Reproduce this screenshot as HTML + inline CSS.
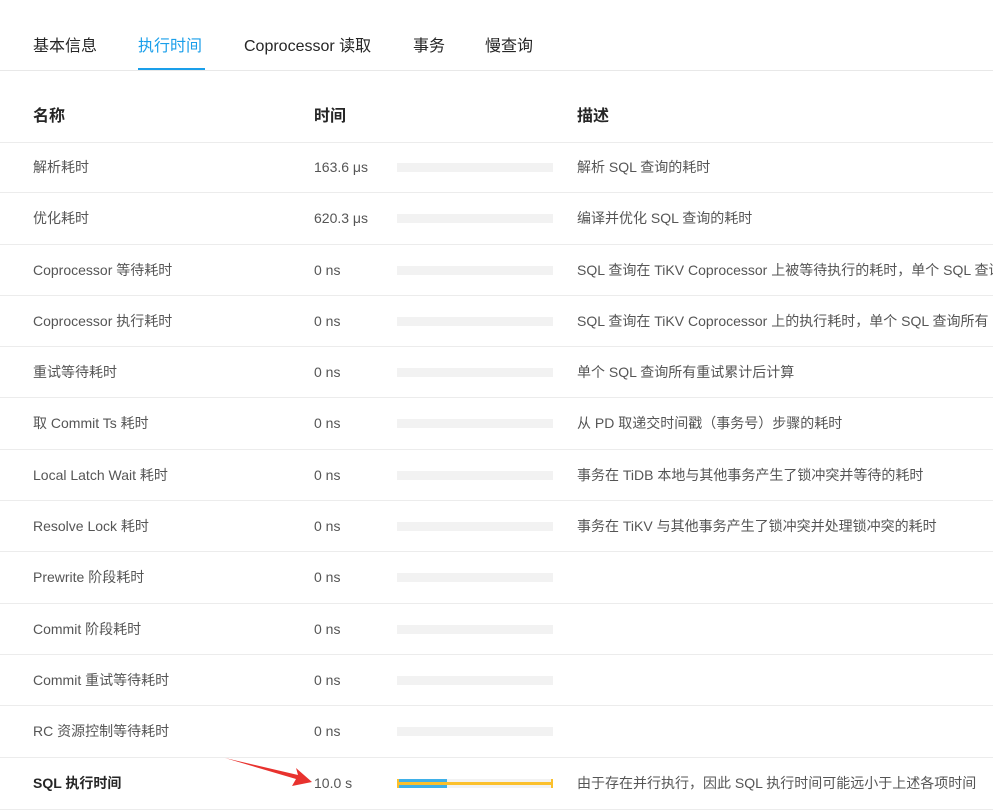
<!DOCTYPE html>
<html><head><meta charset="utf-8"><style>
body{margin:0;width:993px;height:810px;overflow:hidden;background:#fff;font-family:"Liberation Sans","Noto Sans CJK SC",sans-serif;color:#333;position:relative}
.tabs{position:absolute;top:0;left:0;width:993px;height:70px;border-bottom:1px solid #e8e8e8}
.tab{position:absolute;top:36px;font-size:16px;line-height:22px;color:#262626;white-space:nowrap}
.ink{position:absolute;left:138px;top:68px;width:67px;height:2px;background:#1a9fea}
.row{position:absolute;left:0;width:993px;border-bottom:1px solid #ececec;font-size:14px;color:#555}
.row span{position:absolute;white-space:nowrap;line-height:20px}
.bar{position:absolute;left:397px;width:156px;height:9px;background:#f2f2f2}
.h{font-weight:bold;color:#262626;font-size:16px}
</style></head><body>
<div class="tabs">
<div class="tab" style="left:33px">基本信息</div>
<div class="tab" style="left:138px;color:#1a9fea">执行时间</div>
<div class="tab" style="left:244px">Coprocessor 读取</div>
<div class="tab" style="left:413px">事务</div>
<div class="tab" style="left:485px">慢查询</div>
<div class="ink"></div>
</div>
<div class="row h" style="top:90px;height:52px"><span style="left:33px;top:17px">名称</span><span style="left:314px;top:17px">时间</span><span style="left:577px;top:17px">描述</span></div>
<div id="rows"></div>
<script>
var d=[["解析耗时","163.6 μs","解析 SQL 查询的耗时"],["优化耗时","620.3 μs","编译并优化 SQL 查询的耗时"],["Coprocessor 等待耗时","0 ns","SQL 查询在 TiKV Coprocessor 上被等待执行的耗时，单个 SQL 查询所有"],["Coprocessor 执行耗时","0 ns","SQL 查询在 TiKV Coprocessor 上的执行耗时，单个 SQL 查询所有"],["重试等待耗时","0 ns","单个 SQL 查询所有重试累计后计算"],["取 Commit Ts 耗时","0 ns","从 PD 取递交时间戳（事务号）步骤的耗时"],["Local Latch Wait 耗时","0 ns","事务在 TiDB 本地与其他事务产生了锁冲突并等待的耗时"],["Resolve Lock 耗时","0 ns","事务在 TiKV 与其他事务产生了锁冲突并处理锁冲突的耗时"],["Prewrite 阶段耗时","0 ns",""],["Commit 阶段耗时","0 ns",""],["Commit 重试等待耗时","0 ns",""],["RC 资源控制等待耗时","0 ns",""],["SQL 执行时间","10.0 s","由于存在并行执行，因此 SQL 执行时间可能远小于上述各项时间"]];
var t=[142,193,245,296,347,398,450,501,552,604,655,706,758,810],h="";
d.forEach(function(r,i){var top=t[i],ht=t[i+1]-t[i]-1,last=i==12;
h+='<div class="row" style="top:'+top+'px;height:'+ht+'px"><span style="left:33px;top:15px;'+(last?'font-weight:bold;color:#262626':'')+'">'+r[0]+'</span><span style="left:314px;top:15px">'+r[1]+'</span><div class="bar" style="top:21px"></div>'+(last?'<div style="position:absolute;left:397px;top:21px;width:50px;height:9px;background:#3fb0e8"></div><div style="position:absolute;left:397px;top:24px;width:156px;height:3px;background:#fbc02d"></div><div style="position:absolute;left:397px;top:21px;width:2px;height:9px;background:#fbc02d"></div><div style="position:absolute;left:551px;top:21px;width:2px;height:9px;background:#fbc02d"></div>':'')+'<span style="left:577px;top:15px">'+r[2]+'</span></div>';});
document.getElementById("rows").innerHTML=h;
</script>
<svg style="position:absolute;left:0;top:0" width="993" height="810"><polygon points="225,758 298,775 296,768 312,782 292,786 296,779" fill="#e8322e"/></svg>
</body></html>
